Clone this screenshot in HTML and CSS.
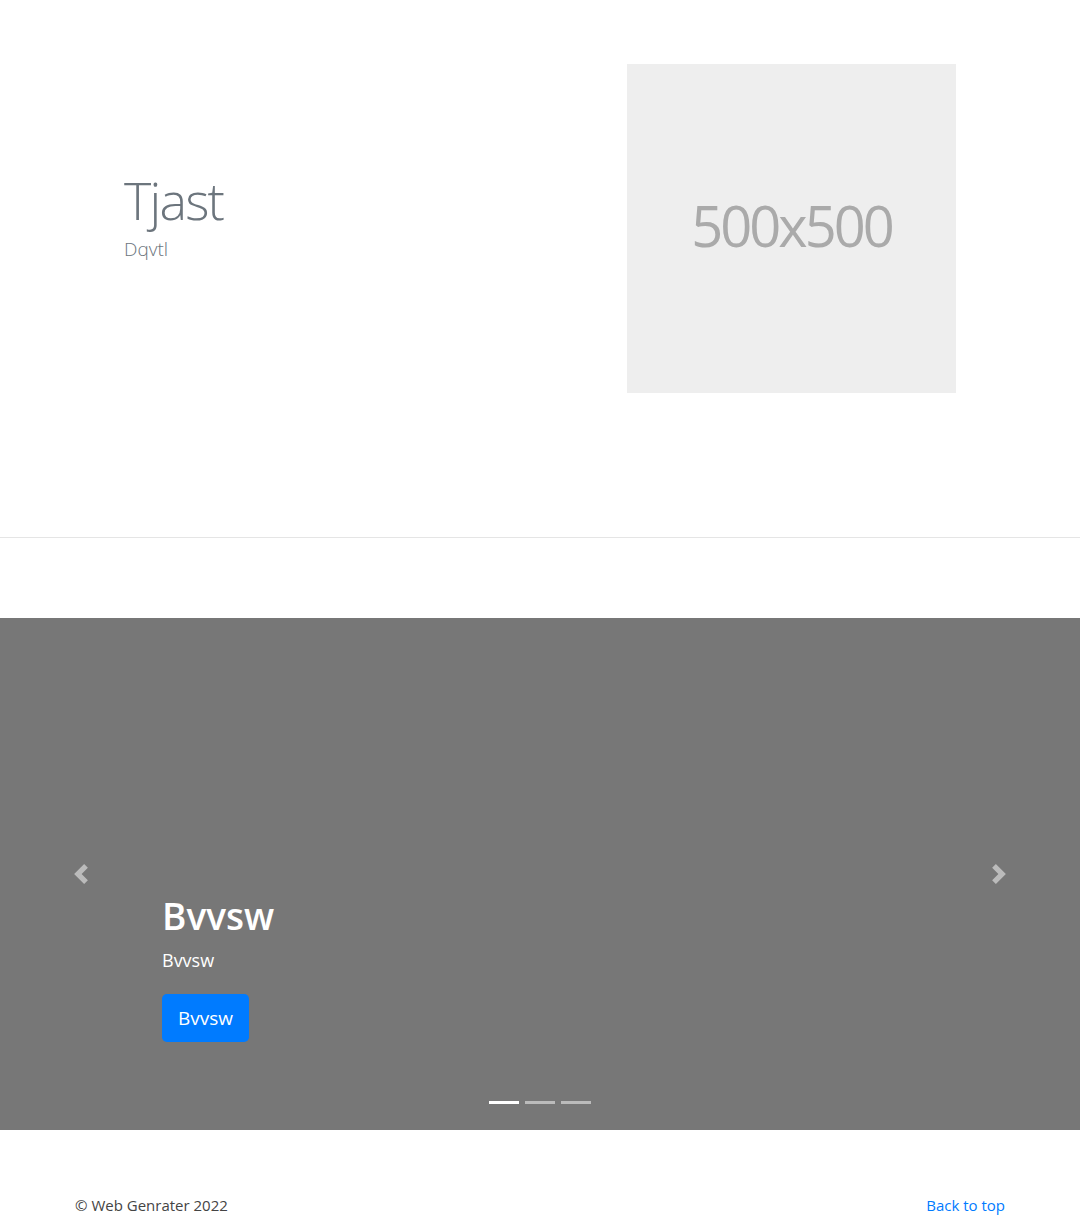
FILE: index.html
```html
<!DOCTYPE html>
<html lang="en">
<head>
<meta charset="utf-8">
<title>Web Genrater</title>
<link rel="stylesheet" href="styles.css">
</head>
<body>
<section class="hero">
  <div class="hero-text">
    <h1 class="hero-title">Tjast</h1>
    <p class="hero-lead">Dqvtl</p>
  </div>
  <div class="placeholder"><span>500x500</span></div>
</section>

<div class="carousel">
  <ol class="indicators">
    <li class="active"></li>
    <li></li>
    <li></li>
  </ol>
  <div class="caption">
    <h2 class="caption-title">Bvvsw</h2>
    <p class="caption-text">Bvvsw</p>
    <p class="caption-action"><a class="btn" href="#">Bvvsw</a></p>
  </div>
  <a class="control prev" href="#" aria-label="Previous">
    <svg viewBox="0 0 8 8" width="20" height="20"><path d="M5.25 0l-4 4 4 4 1.5-1.5L4.25 4l2.5-2.5L5.25 0z" fill="#fff"/></svg>
  </a>
  <a class="control next" href="#" aria-label="Next">
    <svg viewBox="0 0 8 8" width="20" height="20"><path d="M2.75 0l-1.5 1.5L3.75 4l-2.5 2.5L2.75 8l4-4-4-4z" fill="#fff"/></svg>
  </a>
</div>

<footer class="footer">
  <p class="copy">&copy; Web Genrater 2022</p>
  <p><a class="top-link" href="#">Back to top</a></p>
</footer>
</body>
</html>
```

FILE: styles.css
```css
* { box-sizing: border-box; }

body {
  margin: 0;
  font-family: "Open Sans", "Noto Sans", "Liberation Sans", sans-serif;
  font-size: 16px;
  line-height: 1.5;
  color: #212529;
  background: #fff;
}

.hero {
  display: flex;
  justify-content: space-between;
  align-items: center;
  padding: 64px 124px 144px;
  border-bottom: 1px solid #e5e5e5;
  margin-bottom: 80px;
}

.hero-text {
  padding-bottom: 24px;
}

.hero-title {
  margin: 0 0 4px;
  font-size: 52px;
  font-weight: 300;
  line-height: 1.2;
  color: #6c757d;
  letter-spacing: -1.8px;
}

.hero-lead {
  margin: 0;
  font-size: 19px;
  font-weight: 300;
  line-height: 1.5;
  color: #6c757d;
}

.placeholder {
  width: 329px;
  height: 329px;
  background: #eee;
  display: flex;
  align-items: center;
  justify-content: center;
}

.placeholder span {
  font-size: 56px;
  color: #aaa;
  letter-spacing: -3px;
  line-height: 1;
  padding-bottom: 8px;
}

.carousel {
  position: relative;
  height: 512px;
  background: #777;
  margin-bottom: 64px;
  display: flex;
  flex-direction: column;
  justify-content: flex-end;
  padding: 20px 15% 48px;
}

.caption {
  color: #fff;
  padding-bottom: 20px;
}

.caption-title {
  margin: 0 0 8px;
  font-size: 37px;
  font-weight: 600;
  line-height: 1.2;
}

.caption-text {
  margin: 0 0 20px;
  font-size: 18px;
  line-height: 28px;
}

.caption-action {
  margin: 0 0 20px;
  line-height: 0;
}

.btn {
  display: inline-block;
  background: #007bff;
  color: #fff;
  text-decoration: none;
  font-size: 19px;
  line-height: 30px;
  padding: 9px 16px;
  border-radius: 4.8px;
}

.control {
  position: absolute;
  top: 0;
  bottom: 0;
  width: 15%;
  display: flex;
  align-items: center;
  justify-content: center;
  opacity: 0.5;
}

.control.prev { left: 0; }
.control.next { right: 0; }

.indicators {
  position: absolute;
  left: 0;
  right: 0;
  bottom: 16px;
  margin: 0;
  padding: 0;
  list-style: none;
  display: flex;
  justify-content: center;
}

.indicators li {
  width: 30px;
  height: 23px;
  margin: 0 3px;
  border-top: 10px solid transparent;
  border-bottom: 10px solid transparent;
  background: #fff;
  background-clip: padding-box;
  opacity: 0.5;
}

.indicators li.active { opacity: 1; }

.footer {
  display: flex;
  justify-content: space-between;
  padding: 0 75px;
}

.footer p {
  margin: 0 0 16px;
  font-size: 15px;
}

.copy { color: #444; }

.top-link {
  color: #007bff;
  text-decoration: none;
}
```
